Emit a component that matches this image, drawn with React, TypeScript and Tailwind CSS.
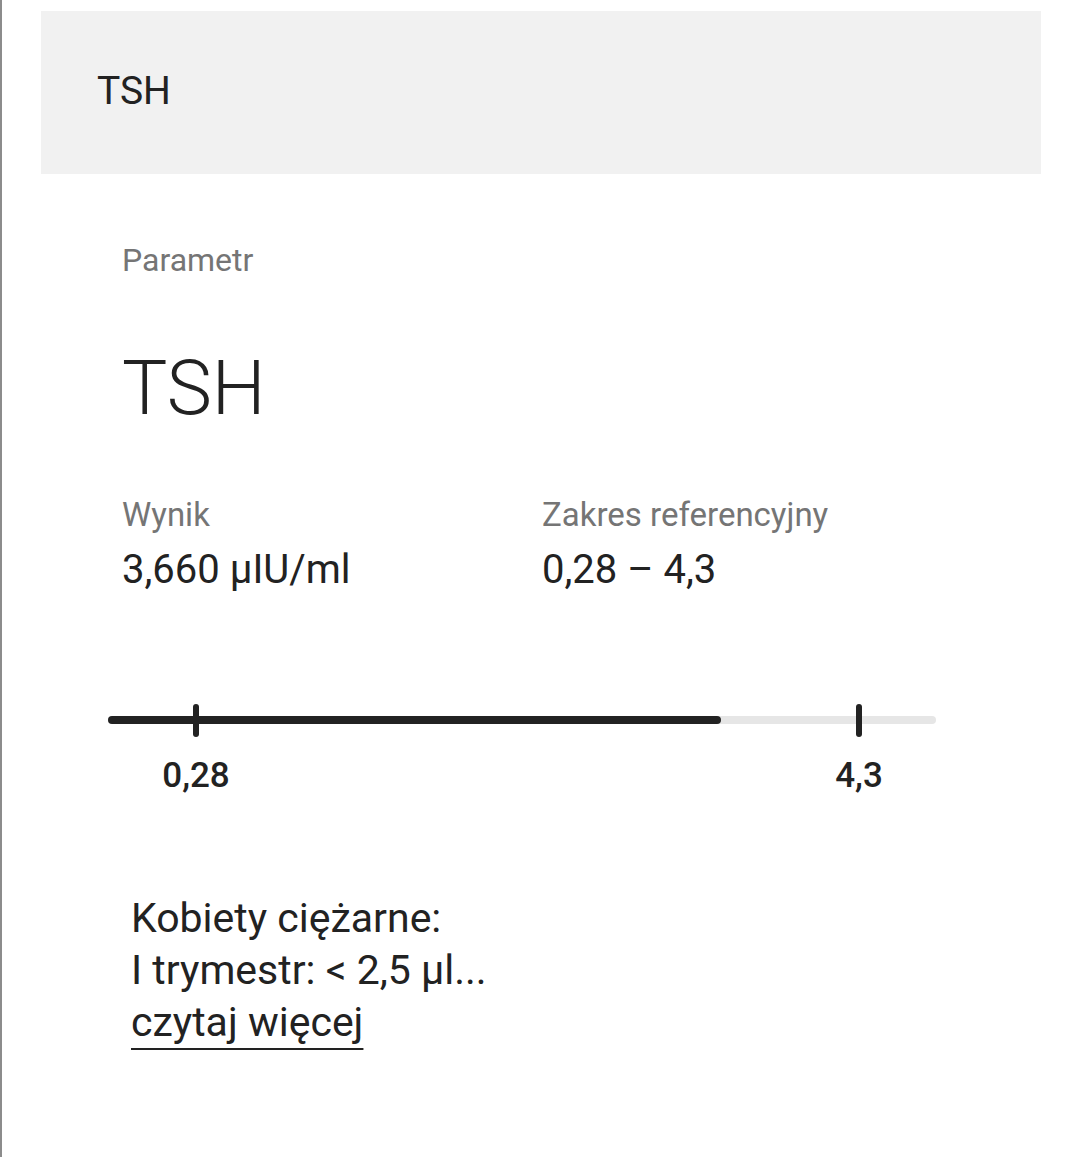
import React from "react";

const result = { name: "TSH", value: "3,660 µIU/ml", low: "0,28", high: "4,3" };

export default function App() {
  return (
    <div className="min-h-[1157px] border-l-2 border-[#8c8c8c] bg-white font-['Roboto','Liberation_Sans',sans-serif] text-[#222]">
      {/* Header bar */}
      <div className="pt-[11px] px-[39px]">
        <div className="h-[163px] bg-[#f1f1f1] flex items-center pl-[56px] pb-[3px]">
          <h1 className="text-[39px] leading-none">{result.name}</h1>
        </div>
      </div>

      {/* Parameter + results */}
      <div className="pl-[120px] pt-[70px] flex flex-col">
        <p className="text-[32px] leading-none text-[#757575]">Parametr</p>
        <p className="mt-[74px] text-[76px] leading-none font-light">{result.name}</p>

        <div className="mt-[72px] grid grid-cols-[420px_1fr]">
          <div className="flex flex-col gap-[19px]">
            <p className="text-[33px] leading-none text-[#757575]">Wynik</p>
            <p className="text-[40px] leading-none">{result.value}</p>
          </div>
          <div className="flex flex-col gap-[19px]">
            <p className="text-[33px] leading-none text-[#757575]">Zakres referencyjny</p>
            <p className="text-[40px] leading-none">
              {result.low} – {result.high}
            </p>
          </div>
        </div>
      </div>

      {/* Range bar */}
      <div className="mt-[114px] ml-[106px] w-[828px] relative h-[90px]">
        <div className="absolute inset-x-0 top-[12px] h-[8px] rounded-full bg-[#e6e6e6]" />
        <div className="absolute left-0 w-[613px] top-[12px] h-[8px] rounded-full bg-[#222]" />
        <div className="absolute left-[85px] top-0 w-[6px] h-[33px] rounded-full bg-[#222]" />
        <div className="absolute left-[748px] top-0 w-[6px] h-[33px] rounded-full bg-[#222]" />
        <span className="absolute left-[88px] -translate-x-1/2 top-[54px] text-[35px] leading-none font-medium">
          {result.low}
        </span>
        <span className="absolute left-[751px] -translate-x-1/2 top-[54px] text-[35px] leading-none font-medium">
          {result.high}
        </span>
      </div>

      {/* Note */}
      <div className="mt-[98px] pl-[129px] text-[41px] leading-[52px] flex flex-col items-start">
        <p>Kobiety ciężarne:</p>
        <p>I trymestr: &lt; 2,5 µl...</p>
        <a href="#" className="underline underline-offset-[12px] decoration-2">
          czytaj więcej
        </a>
      </div>
    </div>
  );
}
